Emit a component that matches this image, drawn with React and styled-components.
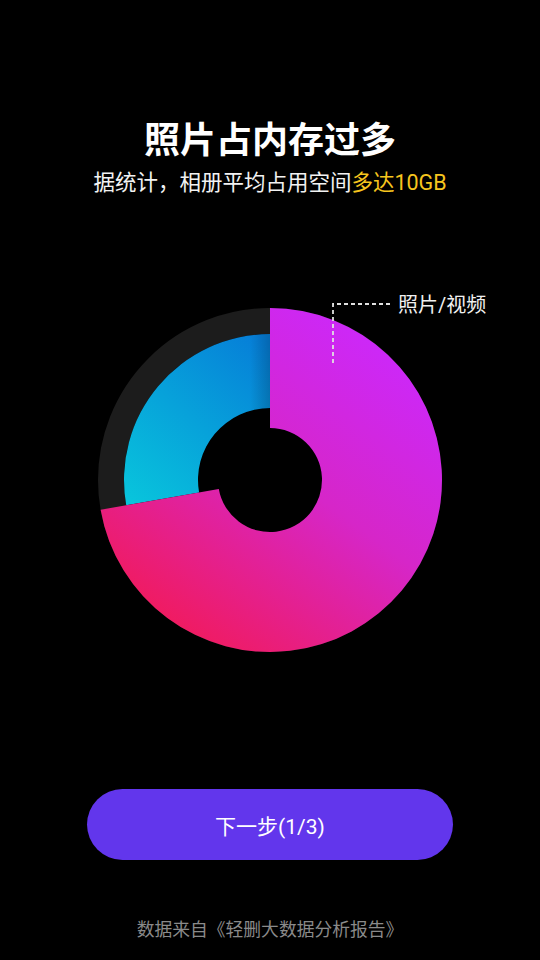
import React from "react";
import styled, { createGlobalStyle } from "styled-components";

const Global = createGlobalStyle`
  html, body { margin: 0; padding: 0; background: #000; }
  body { font-family: Roboto, "Noto Sans CJK SC", sans-serif; }
`;

const Page = styled.div`
  width: 540px;
  height: 960px;
  background: #000;
  display: flex;
  flex-direction: column;
  align-items: center;
  padding-top: 112px;
  box-sizing: border-box;
  overflow: hidden;
`;

const Title = styled.h1`
  margin: 0;
  font-family: "Noto Sans CJK SC", sans-serif;
  font-size: 36px;
  line-height: 50px;
  font-weight: 700;
  color: #fff;
`;

const Subtitle = styled.p`
  margin: 6px 0 0;
  font-family: Roboto, "Noto Sans CJK SC", sans-serif;
  font-size: 21.5px;
  line-height: 30px;
  color: #f2f2f2;
`;

const Highlight = styled.span`
  color: #f7c51e;
`;

const Chart = styled.svg`
  display: block;
  margin-top: 82px;
  width: 540px;
  height: 400px;
  flex-shrink: 0;
`;

const Button = styled.button`
  margin-top: 109px;
  width: 366px;
  height: 71px;
  border: none;
  border-radius: 36px;
  background: #6236ec;
  color: #fff;
  font-family: Roboto, "Noto Sans CJK SC", sans-serif;
  font-size: 21px;
  display: flex;
  align-items: center;
  justify-content: center;
  cursor: pointer;
  padding: 0;
`;

const Footer = styled.p`
  margin: 55px 0 0;
  font-family: "Noto Sans CJK SC", sans-serif;
  font-size: 17.8px;
  line-height: 26px;
  color: #8a8a8a;
`;

const cx = 270;
const cy = 200;
const pt = (r, deg) => {
  const a = (deg * Math.PI) / 180;
  return [cx + r * Math.sin(a), cy - r * Math.cos(a)];
};
const sector = (R, r, a0, a1) => {
  const large = a1 - a0 > 180 ? 1 : 0;
  const [x0, y0] = pt(R, a0);
  const [x1, y1] = pt(R, a1);
  const [x2, y2] = pt(r, a1);
  const [x3, y3] = pt(r, a0);
  return `M${x0} ${y0} A${R} ${R} 0 ${large} 1 ${x1} ${y1} L${x2} ${y2} A${r} ${r} 0 ${large} 0 ${x3} ${y3} Z`;
};

export default function App() {
  const blue = sector(146, 72, 260, 360);
  return (
    <>
      <Global />
      <Page>
        <Title>照片占内存过多</Title>
        <Subtitle>
          据统计，相册平均占用空间<Highlight>多达10GB</Highlight>
        </Subtitle>
        <Chart viewBox="0 0 540 400">
          <defs>
            <linearGradient id="mag" gradientUnits="userSpaceOnUse" x1="400" y1="70" x2="180" y2="370">
              <stop offset="0" stopColor="#cc28fa" />
              <stop offset="0.45" stopColor="#d626c8" />
              <stop offset="1" stopColor="#f21a58" />
            </linearGradient>
            <linearGradient id="blu" gradientUnits="userSpaceOnUse" x1="125" y1="225" x2="265" y2="60">
              <stop offset="0" stopColor="#08c6dc" />
              <stop offset="1" stopColor="#067ed8" />
            </linearGradient>
            <linearGradient id="shade" gradientUnits="userSpaceOnUse" x1="250" y1="0" x2="270" y2="0">
              <stop offset="0" stopColor="#000" stopOpacity="0" />
              <stop offset="1" stopColor="#000" stopOpacity="0.18" />
            </linearGradient>
          </defs>
          <circle cx={cx} cy={cy} r={159} fill="none" stroke="#1c1c1c" strokeWidth="26" />
          <path d={blue} fill="url(#blu)" />
          <path d={blue} fill="url(#shade)" />
          <path d={sector(172, 52, 0, 260)} fill="url(#mag)" />
          <path d="M333 83 V24 H390" fill="none" stroke="#e0e0e0" strokeWidth="1.8" strokeDasharray="4 3" />
          <text x="398" y="32" fill="#f0f0f0" fontSize="20" fontFamily="Roboto, 'Noto Sans CJK SC', sans-serif">照片/视频</text>
        </Chart>
        <Button>下一步(1/3)</Button>
        <Footer>数据来自《轻删大数据分析报告》</Footer>
      </Page>
    </>
  );
}
